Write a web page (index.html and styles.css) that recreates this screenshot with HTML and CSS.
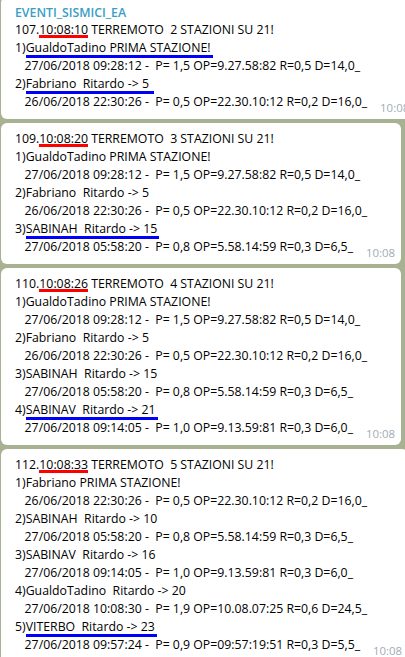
FILE: index.html
```html
<!DOCTYPE html>
<html lang="it">
<head>
<meta charset="utf-8">
<title>EVENTI_SISMICI_EA</title>
<link rel="stylesheet" href="styles.css">
</head>
<body>
<div class="chat">
  <div class="bubble">
    <div class="name">EVENTI_SISMICI_EA</div>
    <div class="line">107.<span class="mark red">10:08:10</span> TERREMOTO  2 STAZIONI SU 21!</div>
    <div class="line">1)<span class="mark blue">GualdoTadino PRIMA STAZIONE!</span></div>
    <div class="line">   27/06/2018 09:28:12 -  P= 1,5 OP=9.27.58:82 R=0,5 D=14,0_</div>
    <div class="line">2)<span class="mark blue">Fabriano  Ritardo -&gt; 5 </span></div>
    <div class="last"><span class="line">   26/06/2018 22:30:26 -  P= 0,5 OP=22.30.10:12 R=0,2 D=16,0_</span><span class="time">10:08</span></div>
  </div>
  <div class="bubble">
    <div class="line">109.<span class="mark red">10:08:20</span> TERREMOTO  3 STAZIONI SU 21!</div>
    <div class="line">1)GualdoTadino PRIMA STAZIONE!</div>
    <div class="line">   27/06/2018 09:28:12 -  P= 1,5 OP=9.27.58:82 R=0,5 D=14,0_</div>
    <div class="line">2)Fabriano  Ritardo -&gt; 5</div>
    <div class="line">   26/06/2018 22:30:26 -  P= 0,5 OP=22.30.10:12 R=0,2 D=16,0_</div>
    <div class="line">3)<span class="mark blue">SABINAH  Ritardo -&gt; 15</span></div>
    <div class="last"><span class="line">   27/06/2018 05:58:20 -  P= 0,8 OP=5.58.14:59 R=0,3 D=6,5_</span><span class="time">10:08</span></div>
  </div>
  <div class="bubble">
    <div class="line">110.<span class="mark red">10:08:26</span> TERREMOTO  4 STAZIONI SU 21!</div>
    <div class="line">1)GualdoTadino PRIMA STAZIONE!</div>
    <div class="line">   27/06/2018 09:28:12 -  P= 1,5 OP=9.27.58:82 R=0,5 D=14,0_</div>
    <div class="line">2)Fabriano  Ritardo -&gt; 5</div>
    <div class="line">   26/06/2018 22:30:26 -  P= 0,5 OP=22.30.10:12 R=0,2 D=16,0_</div>
    <div class="line">3)SABINAH  Ritardo -&gt; 15</div>
    <div class="line">   27/06/2018 05:58:20 -  P= 0,8 OP=5.58.14:59 R=0,3 D=6,5_</div>
    <div class="line">4)<span class="mark blue">SABINAV  Ritardo -&gt; 21</span></div>
    <div class="last"><span class="line">   27/06/2018 09:14:05 -  P= 1,0 OP=9.13.59:81 R=0,3 D=6,0_</span><span class="time">10:08</span></div>
  </div>
  <div class="bubble">
    <div class="line">112.<span class="mark red">10:08:33</span> TERREMOTO  5 STAZIONI SU 21!</div>
    <div class="line">1)Fabriano PRIMA STAZIONE!</div>
    <div class="line">   26/06/2018 22:30:26 -  P= 0,5 OP=22.30.10:12 R=0,2 D=16,0_</div>
    <div class="line">2)SABINAH  Ritardo -&gt; 10</div>
    <div class="line">   27/06/2018 05:58:20 -  P= 0,8 OP=5.58.14:59 R=0,3 D=6,5_</div>
    <div class="line">3)SABINAV  Ritardo -&gt; 16</div>
    <div class="line">   27/06/2018 09:14:05 -  P= 1,0 OP=9.13.59:81 R=0,3 D=6,0_</div>
    <div class="line">4)GualdoTadino  Ritardo -&gt; 20</div>
    <div class="line">   27/06/2018 10:08:30 -  P= 1,9 OP=10.08.07:25 R=0,6 D=24,5_</div>
    <div class="line">5)<span class="mark blue">VITERBO  Ritardo -&gt; 23</span></div>
    <div class="last"><span class="line">   27/06/2018 09:57:24 -  P= 0,9 OP=09:57:19:51 R=0,3 D=5,5_</span><span class="time">10:08</span></div>
  </div>
</div>
</body>
</html>
```
FILE: styles.css
```css
html, body {
  margin: 0;
  padding: 0;
  width: 405px;
  height: 657px;
  overflow: hidden;
  background: #a8b292;
}

.chat {
  display: flex;
  flex-direction: column;
  align-items: flex-start;
  gap: 4px;
  margin-top: -3px;
  padding-left: 1px;
  font-family: "Open Sans", "Noto Sans", sans-serif;
  font-size: 12.3px;
  color: #000;
}

.bubble {
  display: flex;
  flex-direction: column;
  align-items: flex-start;
  width: max-content;
  background: #fff;
  border-radius: 6px;
  padding: 7px 6px 2px 14px;
}

.name {
  font-weight: 600;
  color: #3a9dc5;
  line-height: 17px;
}

.line {
  white-space: pre;
  line-height: 18px;
}

.last {
  display: flex;
  align-items: flex-start;
}

.time {
  margin-left: 13px;
  margin-top: 6px;
  font-size: 11.4px;
  line-height: 18px;
  color: #a0acb6;
}

.mark {
  position: relative;
}

.mark::after {
  content: "";
  position: absolute;
  height: 3px;
}

.mark.red::after {
  left: 0;
  right: 0;
  bottom: 0;
  background: #ff0000;
}

.mark.blue::after {
  left: 0;
  right: -2px;
  bottom: -2px;
  background: #0000ff;
}
```
